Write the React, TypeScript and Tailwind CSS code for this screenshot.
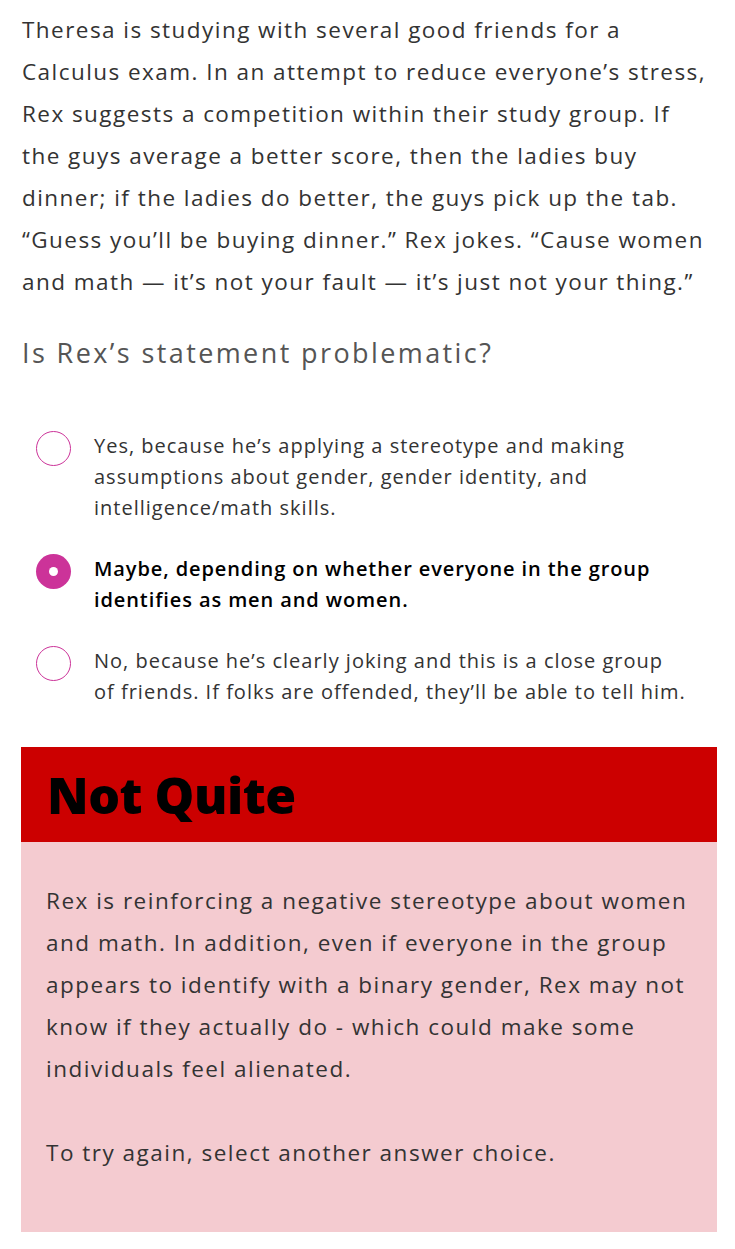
const intro = [
  'Theresa is studying with several good friends for a',
  'Calculus exam. In an attempt to reduce everyone’s stress,',
  'Rex suggests a competition within their study group. If',
  'the guys average a better score, then the ladies buy',
  'dinner; if the ladies do better, the guys pick up the tab.',
  '“Guess you’ll be buying dinner.” Rex jokes. “Cause women',
  'and math — it’s not your fault — it’s just not your thing.”',
];

const options = [
  {
    lines: ['Yes, because he’s applying a stereotype and making', 'assumptions about gender, gender identity, and', 'intelligence/math skills.'],
    selected: false,
  },
  {
    lines: ['Maybe, depending on whether everyone in the group', 'identifies as men and women.'],
    selected: true,
  },
  {
    lines: ['No, because he’s clearly joking and this is a close group', 'of friends. If folks are offended, they’ll be able to tell him.'],
    selected: false,
  },
];

const feedback = [
  'Rex is reinforcing a negative stereotype about women',
  'and math. In addition, even if everyone in the group',
  'appears to identify with a binary gender, Rex may not',
  'know if they actually do - which could make some',
  'individuals feel alienated.',
];

function Radio({ selected }: { selected: boolean }) {
  if (selected) {
    return (
      <span className="flex h-[35px] w-[35px] items-center justify-center rounded-full bg-[#cc3399]">
        <span className="block h-[9px] w-[9px] rounded-full bg-white" />
      </span>
    );
  }
  return <span className="block h-[35px] w-[35px] rounded-full border-[1.5px] border-[#cc3399] bg-white" />;
}

export default function App() {
  return (
    <div className="min-h-[1249px] w-full bg-white font-['Open_Sans','Liberation_Sans',sans-serif] text-[#333]">
      <div className="px-[22px] pt-[9px]">
        <p className="text-[22.5px] leading-[42px] tracking-[1.45px] text-[#333]">
          {intro.map((l, i) => (
            <span key={i} className="block whitespace-nowrap">{l}</span>
          ))}
        </p>

        <h2 className="mt-[30px] text-[27px] leading-[40px] tracking-[2.4px] text-[#555]">Is Rex’s statement problematic?</h2>

        <div className="mt-[57px] flex flex-col gap-[30px] pl-[14px]">
          {options.map((o, i) => (
            <div key={i} className="flex items-start gap-[23px]">
              <div className="flex-shrink-0 pt-[1px]">
                <Radio selected={o.selected} />
              </div>
              <p
                className={`text-[20px] leading-[31px] ${
                  o.selected ? 'font-semibold tracking-[0.9px] text-black' : 'tracking-[1px] text-[#333]'
                }`}
              >
                {o.lines.map((l, j) => (
                  <span key={j} className="block whitespace-nowrap">{l}</span>
                ))}
              </p>
            </div>
          ))}
        </div>
      </div>

      <div className="mx-[21px] mt-[40px] w-[696px]">
        <div className="flex h-[95px] items-center bg-[#cc0000] px-[26px]">
          <h3 className="text-[50px] font-extrabold leading-none tracking-[-0.5px] text-black">Not Quite</h3>
        </div>
        <div className="h-[390px] bg-[#f4cbd0] px-[25px] pt-[38px]">
          <p className="text-[22.5px] leading-[42px] tracking-[1.5px] text-[#333]">
            {feedback.map((l, i) => (
              <span key={i} className="block whitespace-nowrap">{l}</span>
            ))}
          </p>
          <p className="mt-[42px] text-[22.5px] leading-[42px] tracking-[1.5px] text-[#333]">To try again, select another answer choice.</p>
        </div>
      </div>
    </div>
  );
}
